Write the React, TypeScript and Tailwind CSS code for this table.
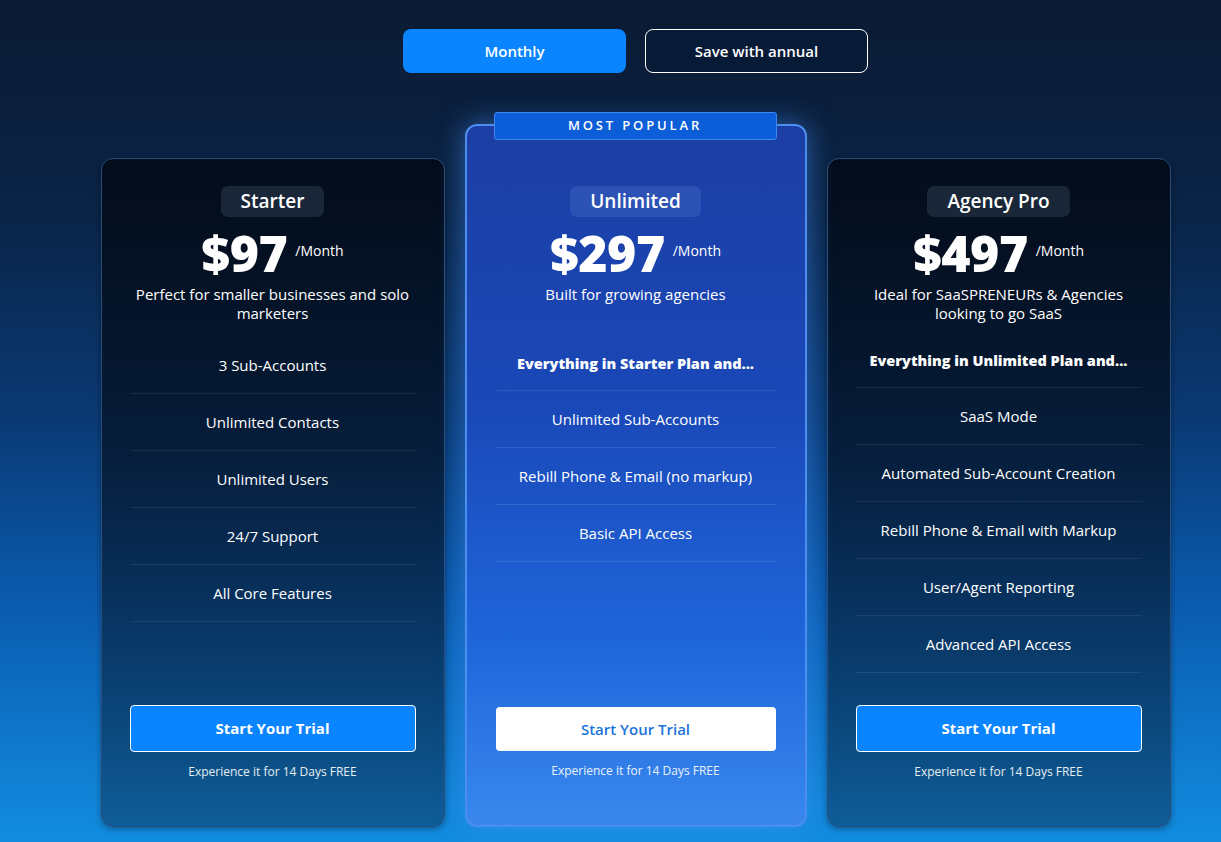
import React from 'react';

type Plan = {
  name: string;
  price: string;
  desc: string;
  lead?: string;
  features: string[];
  popular?: boolean;
  listMt: string;
};

const plans: Plan[] = [
  {
    name: 'Starter',
    price: '$97',
    desc: 'Perfect for smaller businesses and solo marketers',
    features: ['3 Sub-Accounts', 'Unlimited Contacts', 'Unlimited Users', '24/7 Support', 'All Core Features'],
    listMt: 'mt-[14px]',
  },
  {
    name: 'Unlimited',
    price: '$297',
    desc: 'Built for growing agencies',
    lead: 'Everything in Starter Plan and...',
    features: ['Unlimited Sub-Accounts', 'Rebill Phone & Email (no markup)', 'Basic API Access'],
    popular: true,
    listMt: 'mt-[14px]',
  },
  {
    name: 'Agency Pro',
    price: '$497',
    desc: 'Ideal for SaaSPRENEURs & Agencies looking to go SaaS',
    lead: 'Everything in Unlimited Plan and...',
    features: [
      'SaaS Mode',
      'Automated Sub-Account Creation',
      'Rebill Phone & Email with Markup',
      'User/Agent Reporting',
      'Advanced API Access',
    ],
    listMt: 'mt-[11px]',
  },
];

function PlanCard({ plan }: { plan: Plan }) {
  const pop = plan.popular;
  return (
    <div
      className={
        pop
          ? 'relative flex h-[703px] w-[342px] flex-col rounded-[12px] border-2 border-[#4b8df0] bg-[linear-gradient(180deg,#1c3ea4_0%,#1a48b8_40%,#1f67dc_75%,#3a88ee_100%)] px-[29px] pt-[60px] pb-[45px] shadow-[0_0_28px_rgba(70,150,255,0.55)]'
          : 'flex h-[669px] w-[344px] flex-col rounded-[12px] border border-[#2a4d78] bg-[linear-gradient(180deg,rgba(3,11,24,0.95)_0%,rgba(5,22,44,0.8)_45%,rgba(12,56,96,0.55)_100%)] px-[28px] pt-[27px] pb-[45px] shadow-[0_2px_6px_rgba(0,0,0,0.35)]'
      }
    >
      {pop && (
        <div className="absolute top-[-14px] left-[27px] flex h-[28px] w-[283px] items-center justify-center rounded-[3px] border border-[#3d86ee] bg-[#0b5ed8] text-[13px] font-semibold tracking-[0.22em] text-white">
          MOST POPULAR
        </div>
      )}

      {/* header */}
      <div className="flex flex-col items-center">
        <div
          className={`flex h-[31px] items-center rounded-[7px] px-[20px] text-[19px] font-semibold text-white ${
            pop ? 'bg-[#2d52b6]' : 'bg-[#1a2739]'
          }`}
        >
          {plan.name}
        </div>
        <div className="mt-[8px] flex items-center gap-[8px]">
          <span className="text-[50px] leading-[56px] font-extrabold tracking-[-0.5px] text-white">{plan.price}</span>
          <span className="mb-[6px] text-[14px] text-white">/Month</span>
        </div>
        <p className="mt-[4px] min-h-[38px] px-1 text-center text-[15px] leading-[19px] text-white">{plan.desc}</p>
      </div>

      {/* features */}
      <ul className={`flex flex-col ${plan.listMt}`}>
        {plan.lead && (
          <li
            className={`flex h-[54px] items-center justify-center border-b text-[14.5px] font-extrabold text-white ${
              pop ? 'border-white/10' : 'border-white/[0.08]'
            }`}
          >
            {plan.lead}
          </li>
        )}
        {plan.features.map((f) => (
          <li
            key={f}
            className={`flex h-[57px] items-center justify-center border-b text-[15px] text-white ${
              pop ? 'border-white/10' : 'border-white/[0.08]'
            }`}
          >
            {f}
          </li>
        ))}
      </ul>

      {/* footer */}
      <div className="mt-auto flex flex-col items-center">
        <button
          className={
            pop
              ? 'h-[44px] w-full rounded-[4px] bg-white text-[15px] font-semibold text-[#1b73d9]'
              : 'h-[47px] w-full rounded-[4px] border border-white bg-[#0a84ff] text-[15px] font-bold text-white'
          }
        >
          Start Your Trial
        </button>
        <p className="mt-[11px] text-[12px] text-white/90">Experience it for 14 Days FREE</p>
      </div>
    </div>
  );
}

export default function App() {
  return (
    <div
      className="h-[842px] w-full overflow-hidden bg-[linear-gradient(180deg,#0b1a32_0%,#0a2447_25%,#0a3a75_50%,#0a5cb0_72%,#128de0_100%)] font-['Open_Sans',sans-serif]"
    >
      <div className="flex justify-center gap-[19px] pt-[29px] pl-[50px]">
        <button className="h-[44px] w-[223px] rounded-[8px] bg-[#0a84ff] text-[15px] font-semibold text-white">
          Monthly
        </button>
        <button className="h-[44px] w-[223px] rounded-[8px] border border-white bg-[#071b36] text-[15px] font-semibold text-white">
          Save with annual
        </button>
      </div>

      <div className="mt-[51px] flex items-end justify-center gap-[20px] pl-[50px]">
        {plans.map((p) => (
          <PlanCard key={p.name} plan={p} />
        ))}
      </div>
    </div>
  );
}
